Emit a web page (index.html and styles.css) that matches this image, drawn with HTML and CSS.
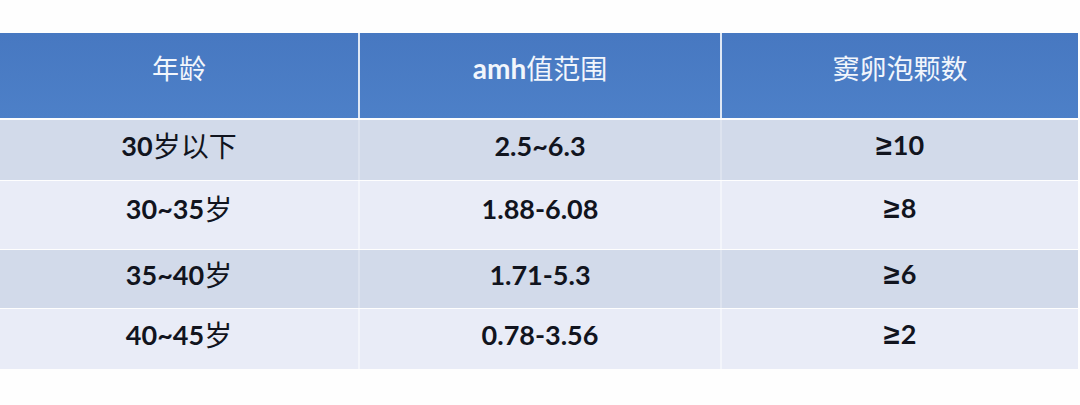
FILE: index.html
```html
<!DOCTYPE html>
<html lang="zh-CN">
<head>
<meta charset="utf-8">
<title>AMH 值参考表</title>
<link rel="stylesheet" href="styles.css">
</head>
<body>
<div class="page">
  <div class="table">
    <div class="row head">
      <div class="cell"><span class="cjk">年龄</span></div>
      <div class="cell"><span class="lat">amh</span><span class="cjk">值范围</span></div>
      <div class="cell"><span class="cjk">窦卵泡颗数</span></div>
    </div>
    <div class="row dark r1">
      <div class="cell"><span class="lat">30</span><span class="cjk">岁以下</span></div>
      <div class="cell"><span class="lat">2.5~6.3</span></div>
      <div class="cell"><span class="lat"><span class="ge">≥</span>10</span></div>
    </div>
    <div class="row light r2">
      <div class="cell"><span class="lat">30~35</span><span class="cjk">岁</span></div>
      <div class="cell"><span class="lat">1.88-6.08</span></div>
      <div class="cell"><span class="lat"><span class="ge">≥</span>8</span></div>
    </div>
    <div class="row dark r3">
      <div class="cell"><span class="lat">35~40</span><span class="cjk">岁</span></div>
      <div class="cell"><span class="lat">1.71-5.3</span></div>
      <div class="cell"><span class="lat"><span class="ge">≥</span>6</span></div>
    </div>
    <div class="row light r4">
      <div class="cell"><span class="lat">40~45</span><span class="cjk">岁</span></div>
      <div class="cell"><span class="lat">0.78-3.56</span></div>
      <div class="cell"><span class="lat"><span class="ge">≥</span>2</span></div>
    </div>
  </div>
</div>
</body>
</html>
```

FILE: styles.css
```css
html, body {
  margin: 0;
  padding: 0;
  background: #ffffff;
}

.page {
  width: 1080px;
  height: 405px;
  padding-top: 33px;
  box-sizing: border-box;
  background: #fefefe;
}

.table {
  width: 1078px;
  display: flex;
  flex-direction: column;
}

.row {
  display: grid;
  grid-template-columns: 358px 360px 356px;
  column-gap: 2px;
}

.cell {
  display: flex;
  align-items: center;
  justify-content: center;
  line-height: 1;
  color: #11141e;
  padding-bottom: 10px;
  box-sizing: border-box;
}

.lat {
  font-family: Lato, "Open Sans", "Liberation Sans", sans-serif;
  font-weight: 700;
  font-size: 27px;
}

.ge {
  font-family: "Liberation Sans", Arial, sans-serif;
  font-weight: 700;
  font-size: 29px;
  margin-right: 1px;
}

.cjk {
  font-family: "Noto Sans CJK SC", "Noto Sans", sans-serif;
  font-weight: 400;
  font-size: 28px;
}

.head {
  height: 85px;
  background: #dfe8f5;
  margin-bottom: 2px;
}

.head .cell {
  background: linear-gradient(#4778c1, #4d80c8);
  color: #f2f6fc;
  padding-bottom: 16px;
}

.head .cjk {
  font-size: 27px;
}

.head .lat {
  font-size: 28px;
}

.dark {
  background: #dde3ef;
}

.dark .cell {
  background: #d2daea;
}

.light {
  background: #f3f5fb;
}

.light .cell {
  background: #e9ecf7;
}

.r1 { height: 60px; }
.r2 { height: 68px; margin-top: 1px; }
.r2 .cell { padding-bottom: 14px; }
.r3 { height: 58px; margin-top: 1px; }
.r4 { height: 60px; margin-top: 1px; }
```
